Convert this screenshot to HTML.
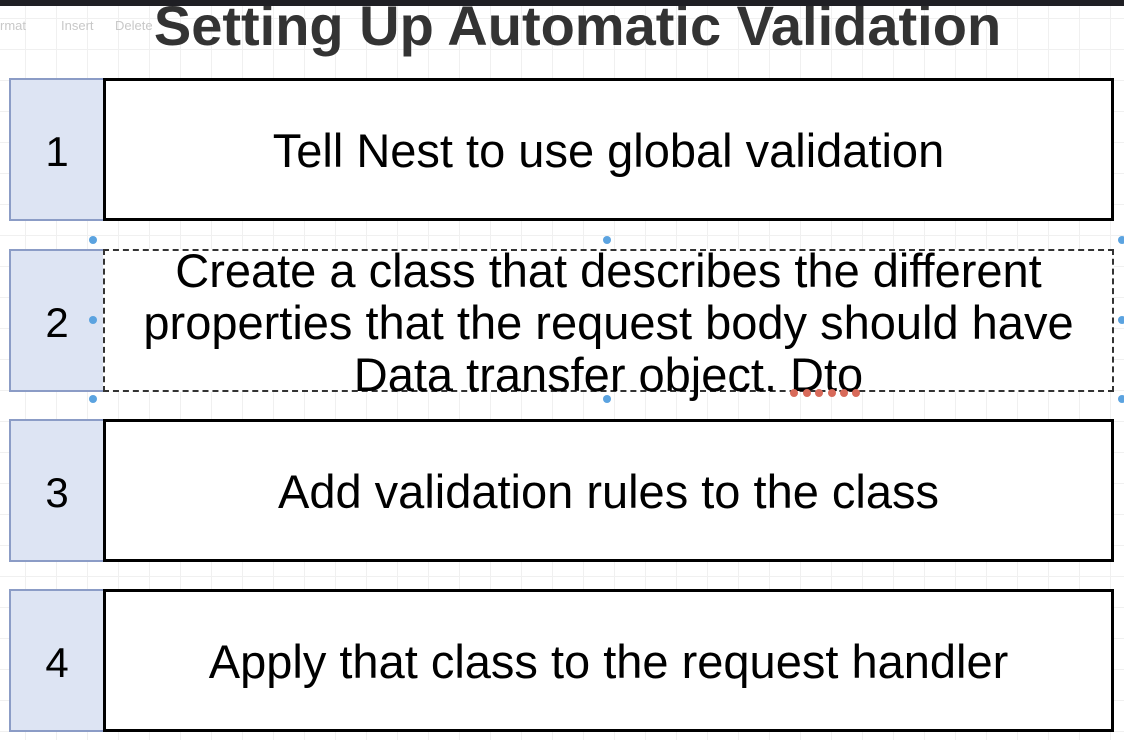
<!DOCTYPE html>
<html><head><style>
*{margin:0;padding:0;box-sizing:border-box}
body{width:1124px;height:740px;overflow:hidden;background:#fff;font-family:"Liberation Sans",Arial,sans-serif;position:relative;
background-image:linear-gradient(#f0f0f0 1px,transparent 1px),linear-gradient(90deg,#f0f0f0 1px,transparent 1px);background-size:31px 31px;background-position:25px 18px}
.top{position:absolute;left:0;top:0;width:1124px;height:6px;background:#1f1f24;z-index:2}
.tb{position:absolute;top:18px;font-size:13px;color:#c8c8c8}
h1{position:absolute;left:0;width:1155px;text-align:center;top:-7px;font-size:56px;font-weight:bold;color:#333}
.num{position:absolute;left:9px;width:96px;height:143px;background:#dde4f3;border:2px solid #8b9cc6;font-size:42px;display:flex;align-items:center;justify-content:center;color:#000;padding-top:4px}
.box{position:absolute;left:103px;width:1011px;height:143px;border:3px solid #000;background:#fff;display:flex;align-items:center;justify-content:center;text-align:center;font-size:47px;color:#000;line-height:52px;padding-top:2px;white-space:nowrap}
.dash{border:2px dashed #333}
.dot{position:absolute;width:8px;height:8px;border-radius:50%;background:#5ba3e0}
.r{position:absolute;width:8px;height:8px;border-radius:50%;background:#d86a5a}
</style></head><body>
<div class="top"></div>
<div class="tb" style="left:0">rmat</div>
<div class="tb" style="left:61px">Insert</div>
<div class="tb" style="left:115px">Delete</div>
<h1>Setting Up Automatic Validation</h1>
<div class="num" style="top:78px">1</div>
<div class="box" style="top:78px">Tell Nest to use global validation</div>
<div class="num" style="top:249px">2</div>
<div class="box dash" style="top:249px;padding-top:4px">Create a class that describes the different<br>properties that the request body should have<br>Data transfer object. Dto</div>
<div class="num" style="top:419px">3</div>
<div class="box" style="top:419px">Add validation rules to the class</div>
<div class="num" style="top:589px">4</div>
<div class="box" style="top:589px">Apply that class to the request handler</div>
<div class="dot" style="left:89px;top:236px"></div>
<div class="dot" style="left:603px;top:236px"></div>
<div class="dot" style="left:1118px;top:236px"></div>
<div class="dot" style="left:89px;top:316px"></div>
<div class="dot" style="left:1118px;top:316px"></div>
<div class="dot" style="left:89px;top:395px"></div>
<div class="dot" style="left:603px;top:395px"></div>
<div class="dot" style="left:1118px;top:395px"></div>
<div class="r" style="left:790px;top:389px"></div>
<div class="r" style="left:803px;top:389px"></div>
<div class="r" style="left:815px;top:389px"></div>
<div class="r" style="left:828px;top:389px"></div>
<div class="r" style="left:840px;top:389px"></div>
<div class="r" style="left:852px;top:389px"></div>
</body></html>
